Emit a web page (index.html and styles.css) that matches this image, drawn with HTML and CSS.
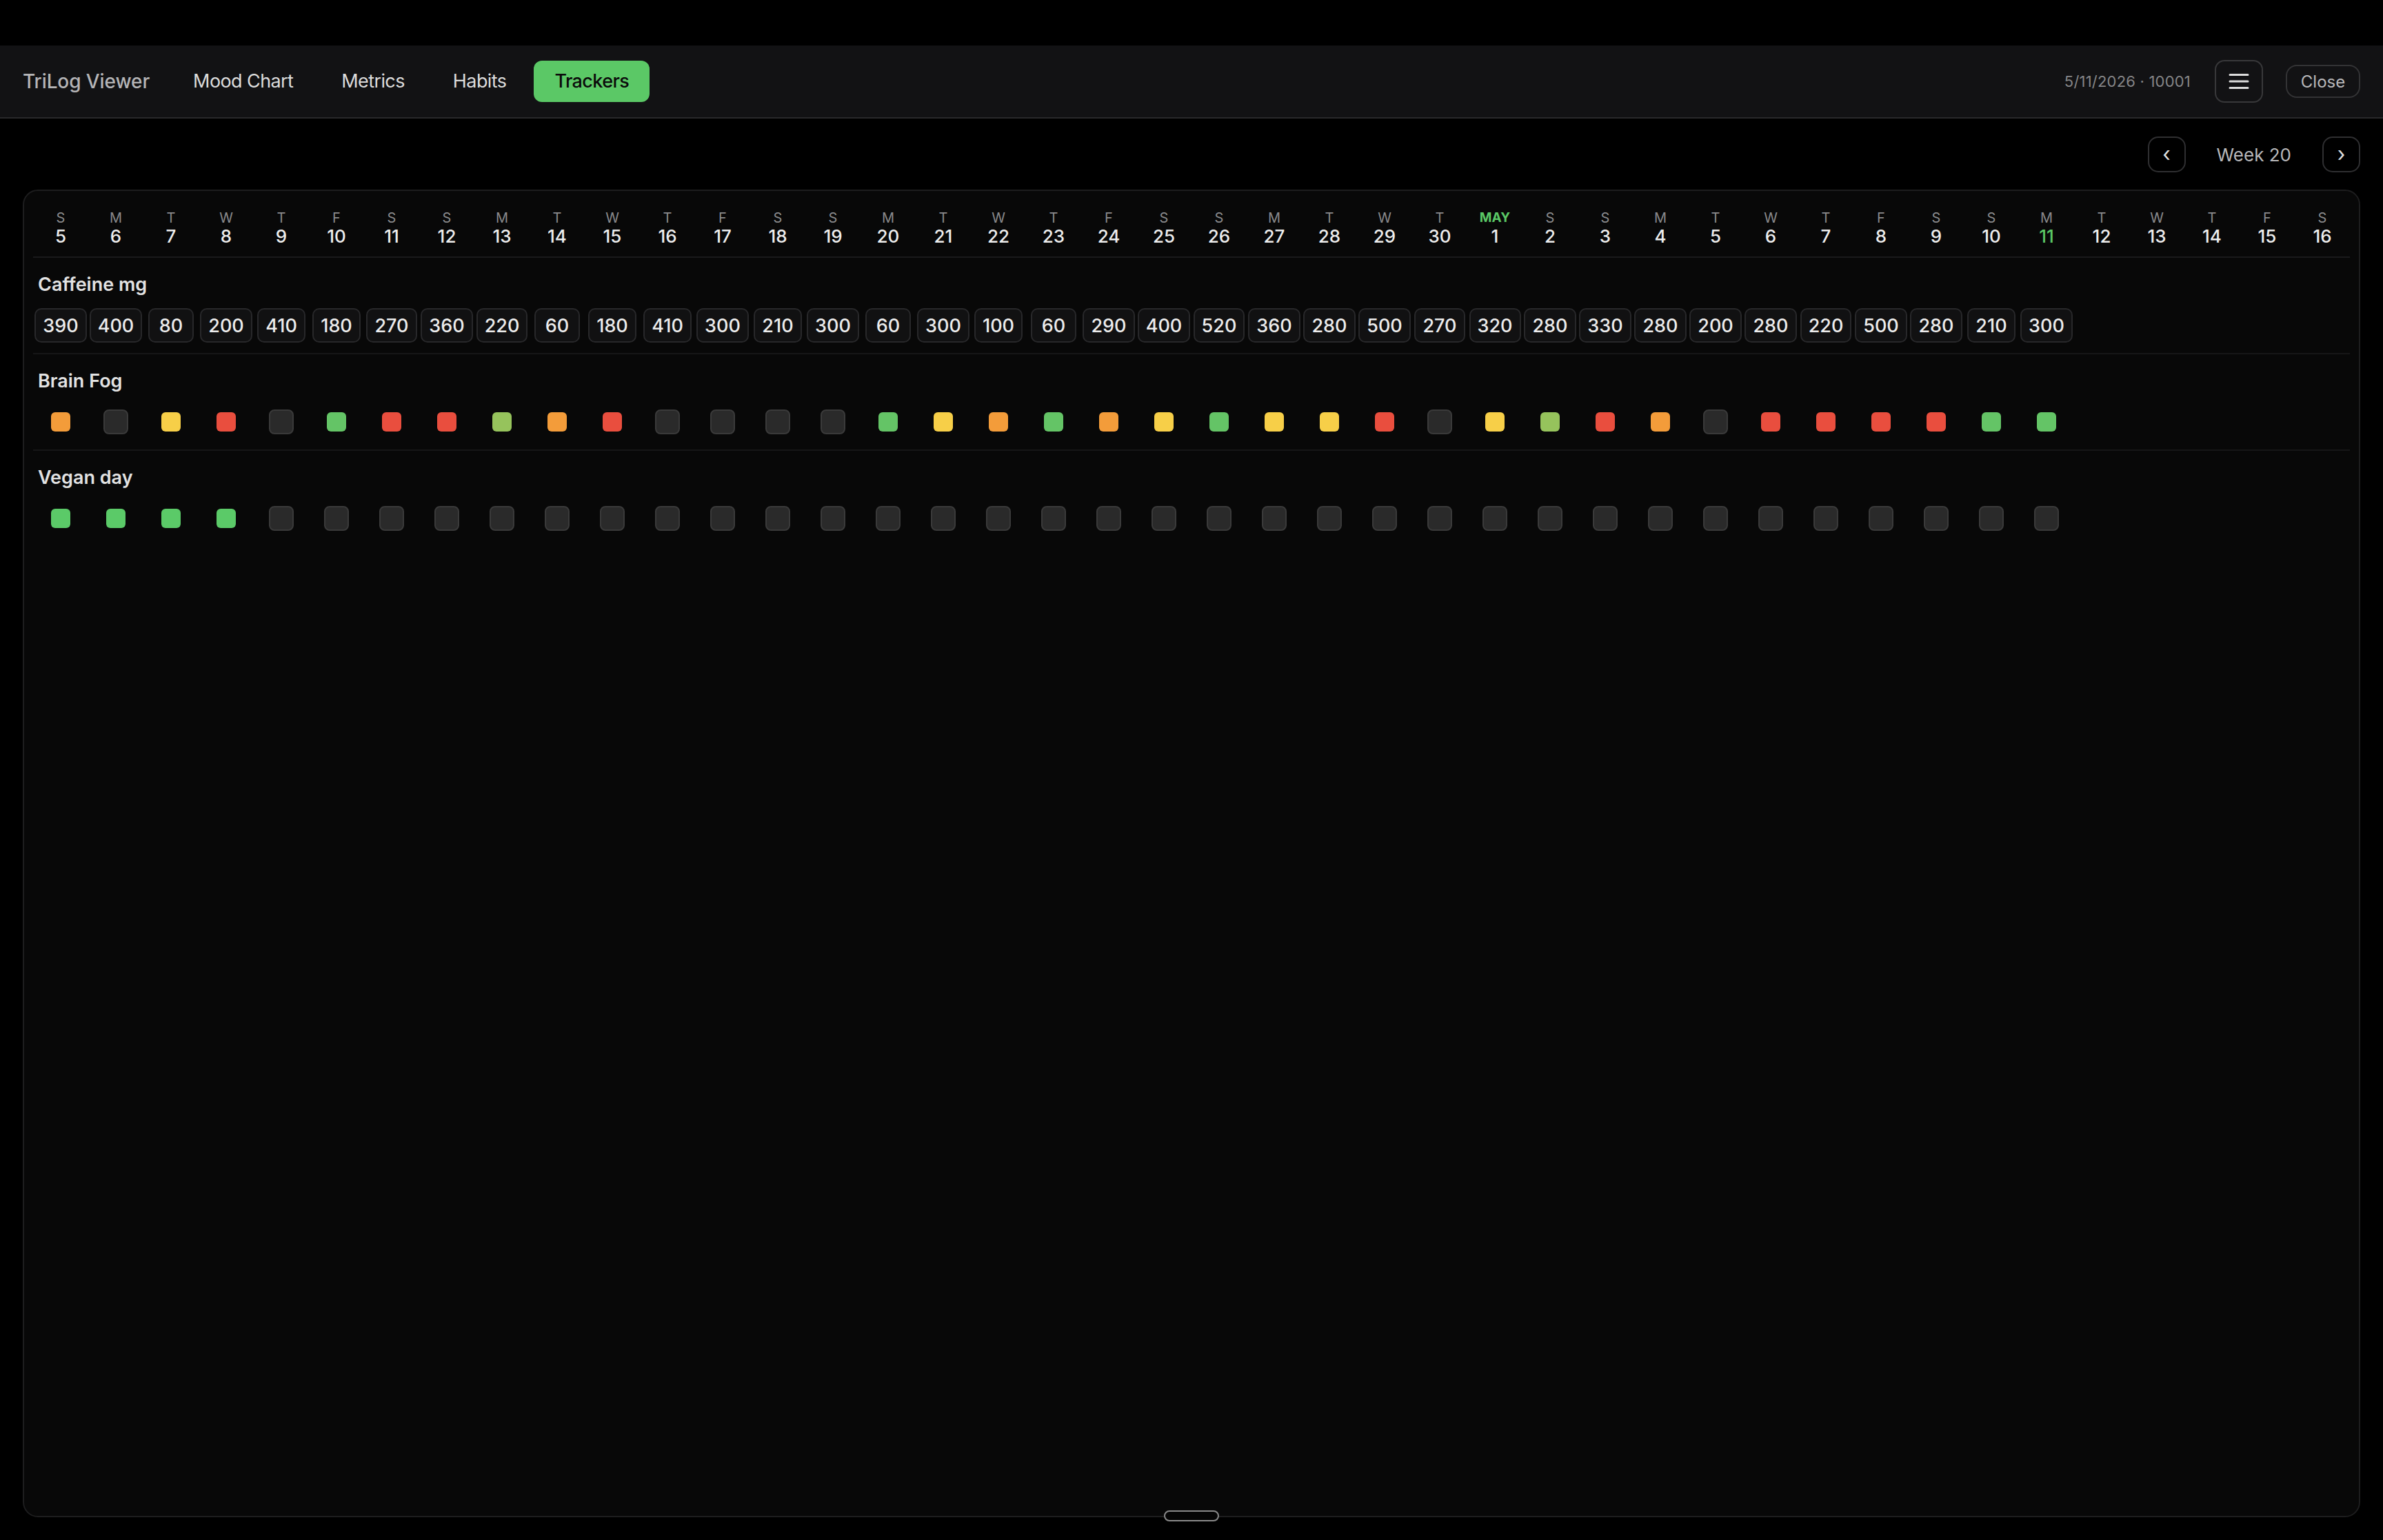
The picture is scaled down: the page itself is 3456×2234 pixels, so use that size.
FILE: index.html
```html
<!DOCTYPE html>
<html lang="en">
<head>
<meta charset="utf-8">
<title>TriLog Viewer</title>
<link rel="stylesheet" href="styles.css">
</head>
<body>
<div class="app">
  <header class="topbar">
    <div class="brand">TriLog Viewer</div>
    <nav class="tabs">
      <span class="tab">Mood Chart</span>
      <span class="tab">Metrics</span>
      <span class="tab">Habits</span>
      <span class="tab active">Trackers</span>
    </nav>
    <div class="right">
      <span class="stamp">5/11/2026 · 10001</span>
      <button class="menu-btn" aria-label="Menu">
        <svg width="30" height="24" viewBox="0 0 30 24"><path d="M2 2.5H28M2 12H28M2 21.5H28" stroke="#dcdcdc" stroke-width="3" stroke-linecap="round"/></svg>
      </button>
      <button class="close-btn">Close</button>
    </div>
  </header>

  <main class="main">
    <div class="weeknav">
      <button class="nav-btn">‹</button>
      <span class="week">Week 20</span>
      <button class="nav-btn">›</button>
    </div>

    <section class="card">
      <div class="grid days">
        <div class="day"><span class="dow">S</span><span class="num">5</span></div>
        <div class="day"><span class="dow">M</span><span class="num">6</span></div>
        <div class="day"><span class="dow">T</span><span class="num">7</span></div>
        <div class="day"><span class="dow">W</span><span class="num">8</span></div>
        <div class="day"><span class="dow">T</span><span class="num">9</span></div>
        <div class="day"><span class="dow">F</span><span class="num">10</span></div>
        <div class="day"><span class="dow">S</span><span class="num">11</span></div>
        <div class="day"><span class="dow">S</span><span class="num">12</span></div>
        <div class="day"><span class="dow">M</span><span class="num">13</span></div>
        <div class="day"><span class="dow">T</span><span class="num">14</span></div>
        <div class="day"><span class="dow">W</span><span class="num">15</span></div>
        <div class="day"><span class="dow">T</span><span class="num">16</span></div>
        <div class="day"><span class="dow">F</span><span class="num">17</span></div>
        <div class="day"><span class="dow">S</span><span class="num">18</span></div>
        <div class="day"><span class="dow">S</span><span class="num">19</span></div>
        <div class="day"><span class="dow">M</span><span class="num">20</span></div>
        <div class="day"><span class="dow">T</span><span class="num">21</span></div>
        <div class="day"><span class="dow">W</span><span class="num">22</span></div>
        <div class="day"><span class="dow">T</span><span class="num">23</span></div>
        <div class="day"><span class="dow">F</span><span class="num">24</span></div>
        <div class="day"><span class="dow">S</span><span class="num">25</span></div>
        <div class="day"><span class="dow">S</span><span class="num">26</span></div>
        <div class="day"><span class="dow">M</span><span class="num">27</span></div>
        <div class="day"><span class="dow">T</span><span class="num">28</span></div>
        <div class="day"><span class="dow">W</span><span class="num">29</span></div>
        <div class="day"><span class="dow">T</span><span class="num">30</span></div>
        <div class="day"><span class="dow month">MAY</span><span class="num">1</span></div>
        <div class="day"><span class="dow">S</span><span class="num">2</span></div>
        <div class="day"><span class="dow">S</span><span class="num">3</span></div>
        <div class="day"><span class="dow">M</span><span class="num">4</span></div>
        <div class="day"><span class="dow">T</span><span class="num">5</span></div>
        <div class="day"><span class="dow">W</span><span class="num">6</span></div>
        <div class="day"><span class="dow">T</span><span class="num">7</span></div>
        <div class="day"><span class="dow">F</span><span class="num">8</span></div>
        <div class="day"><span class="dow">S</span><span class="num">9</span></div>
        <div class="day"><span class="dow">S</span><span class="num">10</span></div>
        <div class="day"><span class="dow">M</span><span class="num today">11</span></div>
        <div class="day"><span class="dow">T</span><span class="num">12</span></div>
        <div class="day"><span class="dow">W</span><span class="num">13</span></div>
        <div class="day"><span class="dow">T</span><span class="num">14</span></div>
        <div class="day"><span class="dow">F</span><span class="num">15</span></div>
        <div class="day"><span class="dow">S</span><span class="num">16</span></div>
      </div>

      <div class="tracker">
        <div class="label">Caffeine mg</div>
        <div class="grid cells">
          <div class="cell"><span class="val">390</span></div>
          <div class="cell"><span class="val">400</span></div>
          <div class="cell"><span class="val">80</span></div>
          <div class="cell"><span class="val">200</span></div>
          <div class="cell"><span class="val">410</span></div>
          <div class="cell"><span class="val">180</span></div>
          <div class="cell"><span class="val">270</span></div>
          <div class="cell"><span class="val">360</span></div>
          <div class="cell"><span class="val">220</span></div>
          <div class="cell"><span class="val">60</span></div>
          <div class="cell"><span class="val">180</span></div>
          <div class="cell"><span class="val">410</span></div>
          <div class="cell"><span class="val">300</span></div>
          <div class="cell"><span class="val">210</span></div>
          <div class="cell"><span class="val">300</span></div>
          <div class="cell"><span class="val">60</span></div>
          <div class="cell"><span class="val">300</span></div>
          <div class="cell"><span class="val">100</span></div>
          <div class="cell"><span class="val">60</span></div>
          <div class="cell"><span class="val">290</span></div>
          <div class="cell"><span class="val">400</span></div>
          <div class="cell"><span class="val">520</span></div>
          <div class="cell"><span class="val">360</span></div>
          <div class="cell"><span class="val">280</span></div>
          <div class="cell"><span class="val">500</span></div>
          <div class="cell"><span class="val">270</span></div>
          <div class="cell"><span class="val">320</span></div>
          <div class="cell"><span class="val">280</span></div>
          <div class="cell"><span class="val">330</span></div>
          <div class="cell"><span class="val">280</span></div>
          <div class="cell"><span class="val">200</span></div>
          <div class="cell"><span class="val">280</span></div>
          <div class="cell"><span class="val">220</span></div>
          <div class="cell"><span class="val">500</span></div>
          <div class="cell"><span class="val">280</span></div>
          <div class="cell"><span class="val">210</span></div>
          <div class="cell"><span class="val">300</span></div>
        </div>
      </div>

      <div class="tracker">
        <div class="label">Brain Fog</div>
        <div class="grid cells">
          <div class="cell"><span class="dot orange"></span></div>
          <div class="cell"><span class="dot empty"></span></div>
          <div class="cell"><span class="dot yellow"></span></div>
          <div class="cell"><span class="dot red"></span></div>
          <div class="cell"><span class="dot empty"></span></div>
          <div class="cell"><span class="dot green"></span></div>
          <div class="cell"><span class="dot red"></span></div>
          <div class="cell"><span class="dot red"></span></div>
          <div class="cell"><span class="dot lime"></span></div>
          <div class="cell"><span class="dot orange"></span></div>
          <div class="cell"><span class="dot red"></span></div>
          <div class="cell"><span class="dot empty"></span></div>
          <div class="cell"><span class="dot empty"></span></div>
          <div class="cell"><span class="dot empty"></span></div>
          <div class="cell"><span class="dot empty"></span></div>
          <div class="cell"><span class="dot green"></span></div>
          <div class="cell"><span class="dot yellow"></span></div>
          <div class="cell"><span class="dot orange"></span></div>
          <div class="cell"><span class="dot green"></span></div>
          <div class="cell"><span class="dot orange"></span></div>
          <div class="cell"><span class="dot yellow"></span></div>
          <div class="cell"><span class="dot green"></span></div>
          <div class="cell"><span class="dot yellow"></span></div>
          <div class="cell"><span class="dot yellow"></span></div>
          <div class="cell"><span class="dot red"></span></div>
          <div class="cell"><span class="dot empty"></span></div>
          <div class="cell"><span class="dot yellow"></span></div>
          <div class="cell"><span class="dot lime"></span></div>
          <div class="cell"><span class="dot red"></span></div>
          <div class="cell"><span class="dot orange"></span></div>
          <div class="cell"><span class="dot empty"></span></div>
          <div class="cell"><span class="dot red"></span></div>
          <div class="cell"><span class="dot red"></span></div>
          <div class="cell"><span class="dot red"></span></div>
          <div class="cell"><span class="dot red"></span></div>
          <div class="cell"><span class="dot green"></span></div>
          <div class="cell"><span class="dot green"></span></div>
        </div>
      </div>

      <div class="tracker last">
        <div class="label">Vegan day</div>
        <div class="grid cells">
          <div class="cell"><span class="dot vgreen"></span></div>
          <div class="cell"><span class="dot vgreen"></span></div>
          <div class="cell"><span class="dot vgreen"></span></div>
          <div class="cell"><span class="dot vgreen"></span></div>
          <div class="cell"><span class="dot empty"></span></div>
          <div class="cell"><span class="dot empty"></span></div>
          <div class="cell"><span class="dot empty"></span></div>
          <div class="cell"><span class="dot empty"></span></div>
          <div class="cell"><span class="dot empty"></span></div>
          <div class="cell"><span class="dot empty"></span></div>
          <div class="cell"><span class="dot empty"></span></div>
          <div class="cell"><span class="dot empty"></span></div>
          <div class="cell"><span class="dot empty"></span></div>
          <div class="cell"><span class="dot empty"></span></div>
          <div class="cell"><span class="dot empty"></span></div>
          <div class="cell"><span class="dot empty"></span></div>
          <div class="cell"><span class="dot empty"></span></div>
          <div class="cell"><span class="dot empty"></span></div>
          <div class="cell"><span class="dot empty"></span></div>
          <div class="cell"><span class="dot empty"></span></div>
          <div class="cell"><span class="dot empty"></span></div>
          <div class="cell"><span class="dot empty"></span></div>
          <div class="cell"><span class="dot empty"></span></div>
          <div class="cell"><span class="dot empty"></span></div>
          <div class="cell"><span class="dot empty"></span></div>
          <div class="cell"><span class="dot empty"></span></div>
          <div class="cell"><span class="dot empty"></span></div>
          <div class="cell"><span class="dot empty"></span></div>
          <div class="cell"><span class="dot empty"></span></div>
          <div class="cell"><span class="dot empty"></span></div>
          <div class="cell"><span class="dot empty"></span></div>
          <div class="cell"><span class="dot empty"></span></div>
          <div class="cell"><span class="dot empty"></span></div>
          <div class="cell"><span class="dot empty"></span></div>
          <div class="cell"><span class="dot empty"></span></div>
          <div class="cell"><span class="dot empty"></span></div>
          <div class="cell"><span class="dot empty"></span></div>
        </div>
      </div>

      <div class="handle"></div>
    </section>
  </main>
</div>
</body>
</html>
```

FILE: styles.css
```css
* { box-sizing: border-box; }

html, body {
  margin: 0;
  padding: 0;
  background: #000;
}

body {
  font-family: Inter, "Noto Sans", "Liberation Sans", sans-serif;
  color: #e6e6e6;
}

.app {
  height: 2234px;
  display: flex;
  flex-direction: column;
  padding-top: 66px;
}

/* ---------- top bar ---------- */
.topbar {
  height: 106px;
  flex: none;
  display: flex;
  align-items: center;
  padding: 0 33px;
  background: #121214;
  border-bottom: 2px solid #29292b;
}

.brand {
  font-size: 28px;
  font-weight: 500;
  color: #b4b4b6;
  letter-spacing: -0.1px;
}

.tabs {
  display: flex;
  gap: 10px;
  margin-left: 33px;
}

.tab {
  height: 60px;
  line-height: 60px;
  padding: 0 30px;
  border-radius: 12px;
  font-size: 27px;
  letter-spacing: -0.6px;
  color: #dcdcdc;
}

.tab.active {
  background: #5bc866;
  color: #0b0b0b;
  font-weight: 500;
}

.right {
  margin-left: auto;
  display: flex;
  align-items: center;
}

.stamp {
  font-size: 22px;
  color: #858587;
  letter-spacing: 0.2px;
}

.menu-btn {
  margin-left: 35px;
  width: 70px;
  height: 62px;
  border: 2px solid #38383a;
  border-radius: 14px;
  background: transparent;
  display: flex;
  align-items: center;
  justify-content: center;
  padding: 0;
}

.close-btn {
  margin-left: 33px;
  width: 108px;
  height: 48px;
  border: 2px solid #333335;
  border-radius: 16px;
  background: transparent;
  color: #b8b8ba;
  font-family: inherit;
  font-size: 24px;
  padding: 0;
}

/* ---------- main ---------- */
.main {
  flex: 1;
  display: flex;
  flex-direction: column;
  padding: 26px 33px 33px;
  min-height: 0;
}

.weeknav {
  display: flex;
  justify-content: flex-end;
  align-items: center;
  height: 52px;
  margin-bottom: 25px;
}

.nav-btn {
  width: 55px;
  height: 52px;
  border: 2px solid #2f2f31;
  border-radius: 15px;
  background: transparent;
  color: #e0e0e0;
  font-family: inherit;
  font-size: 30px;
  line-height: 1;
  padding: 0 0 2px;
}

.week {
  margin: 0 45px;
  font-size: 26px;
  color: #b8b8ba;
}

/* ---------- card ---------- */
.card {
  position: relative;
  flex: 1;
  background: #080808;
  border: 2px solid #1d1d1e;
  border-radius: 22px;
  padding: 0 13px;
}

.grid {
  display: grid;
  grid-template-columns: repeat(42, 80px);
}

.days {
  padding: 27px 0 14px;
  border-bottom: 2px solid #1a1a1b;
}

.day {
  display: flex;
  flex-direction: column;
  align-items: center;
}

.dow {
  font-size: 20px;
  line-height: 24px;
  color: #8a8a8c;
}

.dow.month {
  color: #5bc866;
  font-weight: 700;
  font-size: 19px;
}

.num {
  font-size: 26px;
  line-height: 30px;
  font-weight: 500;
  color: #ededed;
}

.num.today { color: #5bc866; }

.tracker {
  padding: 22px 0 15px;
  border-bottom: 2px solid #161617;
}

.tracker.last { border-bottom: none; }

.label {
  padding-left: 7px;
  font-size: 27px;
  line-height: 34px;
  font-weight: 600;
  color: #e2e2e2;
}

.cells {
  margin-top: 17px;
  height: 50px;
}

.cell {
  display: flex;
  align-items: center;
  justify-content: center;
  height: 50px;
}

.val {
  min-width: 66px;
  height: 50px;
  padding: 0 10px;
  display: flex;
  align-items: center;
  justify-content: center;
  background: #111112;
  border: 2px solid #28282a;
  border-radius: 10px;
  font-size: 27px;
  font-weight: 500;
  color: #ececec;
}

.dot {
  width: 28px;
  height: 28px;
  border-radius: 6px;
}

.dot.empty {
  width: 36px;
  height: 36px;
  border-radius: 8px;
  background: #2a2a2a;
  border: 2px solid #3a3a3a;
}

.dot.orange { background: #f39c3a; }
.dot.yellow { background: #f7cf48; }
.dot.red { background: #e94e3e; }
.dot.green { background: #64c466; }
.dot.lime { background: #96c35c; }
.dot.vgreen { background: #5bca68; }

.handle {
  position: absolute;
  left: 50%;
  bottom: -8px;
  width: 80px;
  height: 16px;
  margin-left: -40px;
  border: 2px solid #8a8a8a;
  border-radius: 8px;
  background: #050505;
}
```
